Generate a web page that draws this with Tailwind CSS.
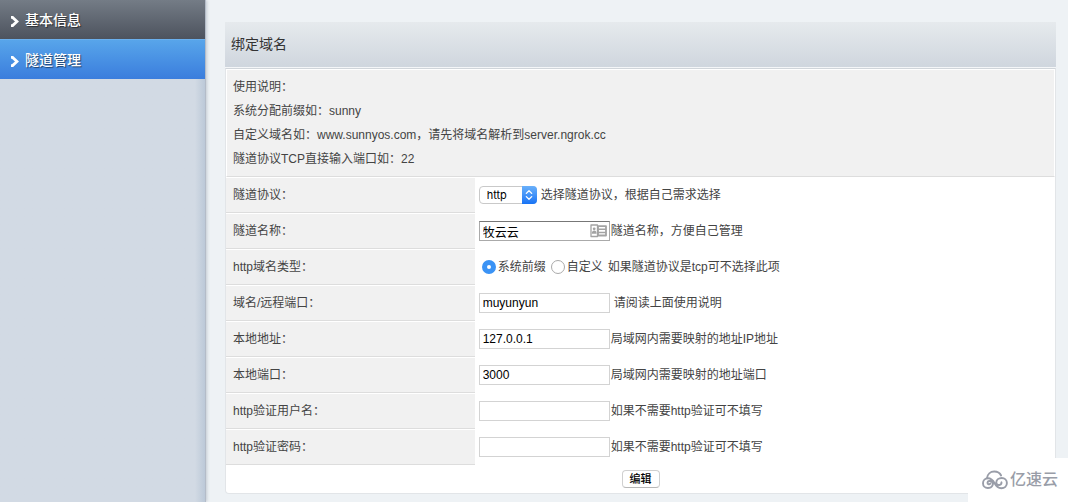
<!DOCTYPE html>
<html lang="zh-CN">
<head>
<meta charset="utf-8">
<meta name="viewport" content="width=device-width, initial-scale=1">
<title>隧道管理</title>
<script src="https://cdn.jsdelivr.net/npm/@tailwindcss/browser@4"></script>
</head>
<body class="relative flex min-h-screen bg-[#eef2f5] font-['Liberation_Sans','Noto_Sans_CJK_SC',sans-serif] text-xs text-[#444]">

<aside class="w-[206px] shrink-0 border-r border-[#b4bcc8] bg-[#d2dae4] bg-linear-to-l from-[#bcc9d8] to-[#d2dae4] to-[10px] shadow-[1px_0_3px_#c3cad3]">
  <nav class="text-sm font-medium text-white [text-shadow:1px_1px_1px_#0008]">
    <a href="#info" class="flex h-[39px] items-center gap-[6px] bg-linear-to-b from-[#747c86] to-[#4d535e] pl-[10px]">
      <svg class="mt-1 h-[11px] w-[9px]" viewBox="0 0 9 11" fill="none" stroke="currentColor" stroke-width="2.8"><path d="M1 1.400h1.600L7 5.500 2.600 9.600H1"/></svg>
      基本信息
    </a>
    <a href="#tunnels" class="flex h-10 items-center gap-[6px] border-t border-[#6bb0ee] bg-linear-to-b from-[#58a5ea] to-[#3b7ddd] pl-[10px]">
      <svg class="mt-1 h-[11px] w-[9px]" viewBox="0 0 9 11" fill="none" stroke="currentColor" stroke-width="2.8"><path d="M1 1.400h1.600L7 5.500 2.600 9.600H1"/></svg>
      隧道管理
    </a>
  </nav>
</aside>

<main class="min-w-0 flex-1 pt-[22px] pr-3 pb-2 pl-[19px]">
  <h1 class="flex h-[46px] items-center border-b border-[#f4f6f8] bg-linear-to-b from-[#e6eaed] to-[#cfd6de] pb-0.5 pl-[6px] text-sm text-[#333]">绑定域名</h1>
  <form class="rounded-b border border-t-[#d0d5da] border-[#e2e5e8] bg-white">
    <table class="w-full table-fixed border-separate border-spacing-0">
      <colgroup><col class="w-[30%]"><col></colgroup>
      <tbody>
        <tr>
          <td colspan="2" class="border border-white border-b-[#ddd] bg-[#f1f1f1] px-[6px] pt-[5px] pb-[5px] leading-6">
            <p>使用说明：</p>
            <p>系统分配前缀如：sunny</p>
            <p>自定义域名如：www.sunnyos.com，请先将域名解析到server.ngrok.cc</p>
            <p>隧道协议TCP直接输入端口如：22</p>
          </td>
        </tr>
        <tr class="h-9">
          <th scope="row" class="border-y border-t-white border-b-[#ddd] bg-[#f1f1f1] pl-[7px] text-left font-normal"><label for="protocol">隧道协议：</label></th>
          <td class="pl-1">
            <div class="flex items-center gap-1">
              <div class="relative flex">
                <select id="protocol" class="h-[18px] w-[58px] appearance-none rounded border border-[#c9c9c9] bg-white pl-[7px] font-['Inter',sans-serif] text-[11px] leading-4 text-black"><option>http</option><option>https</option><option>tcp</option></select>
                <span class="pointer-events-none absolute inset-y-0 right-0 flex w-[15px] items-center justify-center rounded-r bg-linear-to-b from-[#69b0fa] to-[#1673f5]">
                  <svg class="h-3 w-2" viewBox="0 0 8 12" fill="none" stroke="white" stroke-width="1.3" stroke-linecap="round" stroke-linejoin="round"><path d="M1.300 4.400 4 1.700l2.700 2.700M1.300 7.600 4 10.300l2.700-2.700"/></svg>
                </span>
              </div>
              <span>选择隧道协议，根据自己需求选择</span>
            </div>
          </td>
        </tr>
        <tr class="h-9">
          <th scope="row" class="border-y border-t-white border-b-[#ddd] bg-[#f1f1f1] pl-[7px] text-left font-normal"><label for="name">隧道名称：</label></th>
          <td class="pl-1">
            <div class="flex items-center gap-px">
              <div class="relative flex">
                <input id="name" type="text" value="牧云云" class="h-5 w-[131px] border border-[#aaa] border-t-[#777] bg-white pr-6 pl-[3px] text-black">
                <svg class="pointer-events-none absolute top-[3px] right-[3px] h-[14px] w-[17px]" viewBox="0 0 17 14" fill="none" stroke="#a3a3a3" stroke-linejoin="round"><path d="M1 1h6.500v11.500H1z" stroke-width="1.300"/><path d="M8 2.200h8v9.300H8z" stroke-width="1.800"/><path d="M8 5.300h8M8 8.400h8" stroke-width="1.500"/><circle cx="4.200" cy="4.800" r="1.400" fill="#a3a3a3" stroke="none"/><path d="M1.800 9.800c0-2.200 1-3.200 2.400-3.200s2.400 1 2.400 3.200z" fill="#a3a3a3" stroke="none"/></svg>
              </div>
              <span>隧道名称，方便自己管理</span>
            </div>
          </td>
        </tr>
        <tr class="h-9">
          <th scope="row" class="border-y border-t-white border-b-[#ddd] bg-[#f1f1f1] pl-[7px] text-left font-normal">http域名类型：</th>
          <td class="pl-[7px]">
            <div class="flex items-center gap-[5px]">
              <label class="flex items-center gap-0.5"><input type="radio" name="kind" checked class="size-[14px] appearance-none rounded-full border border-[#aaa] bg-white checked:border-5 checked:border-[#3b93f5]">系统前缀</label>
              <label class="flex items-center gap-0.5"><input type="radio" name="kind" class="size-[14px] appearance-none rounded-full border border-[#aaa] bg-white checked:border-5 checked:border-[#3b93f5]">自定义</label>
              <span>如果隧道协议是tcp可不选择此项</span>
            </div>
          </td>
        </tr>
        <tr class="h-9">
          <th scope="row" class="border-y border-t-white border-b-[#ddd] bg-[#f1f1f1] pl-[7px] text-left font-normal"><label for="domain">域名/远程端口：</label></th>
          <td class="pl-1"><div class="flex items-center gap-1"><input id="domain" type="text" value="muyunyun" class="h-5 w-[131px] border border-[#d3d3d3] bg-white px-[3px] text-black"><span>请阅读上面使用说明</span></div></td>
        </tr>
        <tr class="h-9">
          <th scope="row" class="border-y border-t-white border-b-[#ddd] bg-[#f1f1f1] pl-[7px] text-left font-normal"><label for="host">本地地址：</label></th>
          <td class="pl-1"><div class="flex items-center gap-px"><input id="host" type="text" value="127.0.0.1" class="h-5 w-[131px] border border-[#d3d3d3] bg-white px-[3px] text-black"><span>局域网内需要映射的地址IP地址</span></div></td>
        </tr>
        <tr class="h-9">
          <th scope="row" class="border-y border-t-white border-b-[#ddd] bg-[#f1f1f1] pl-[7px] text-left font-normal"><label for="port">本地端口：</label></th>
          <td class="pl-1"><div class="flex items-center gap-px"><input id="port" type="text" value="3000" class="h-5 w-[131px] border border-[#d3d3d3] bg-white px-[3px] text-black"><span>局域网内需要映射的地址端口</span></div></td>
        </tr>
        <tr class="h-9">
          <th scope="row" class="border-y border-t-white border-b-[#ddd] bg-[#f1f1f1] pl-[7px] text-left font-normal"><label for="user">http验证用户名：</label></th>
          <td class="pl-1"><div class="flex items-center gap-px"><input id="user" type="text" class="h-5 w-[131px] border border-[#d3d3d3] bg-white px-[3px] text-black"><span>如果不需要http验证可不填写</span></div></td>
        </tr>
        <tr class="h-9">
          <th scope="row" class="border-y border-t-white border-b-[#ddd] bg-[#f1f1f1] pl-[7px] text-left font-normal"><label for="pass">http验证密码：</label></th>
          <td class="pl-1"><div class="flex items-center gap-px"><input id="pass" type="password" class="h-5 w-[131px] border border-[#d3d3d3] bg-white px-[3px] text-black"><span>如果不需要http验证可不填写</span></div></td>
        </tr>
      </tbody>
    </table>
    <div class="flex h-7 items-center justify-center">
      <button type="submit" class="h-[18px] rounded border border-[#d0d0d0] border-b-[#b8b8b8] bg-white px-[7px] text-[11px] leading-4 font-medium text-black">编辑</button>
    </div>
  </form>
</main>

<div class="absolute right-0 bottom-0 flex h-11 w-[100px] items-center gap-0.5 bg-white pl-[14px] text-base font-medium text-[#999da8]">
  <svg class="h-5 w-[26px] shrink-0" viewBox="0 0 26 20" fill="none" stroke="currentColor" stroke-width="1.900" stroke-linecap="round"><path d="M5 8.200C5.400 4.200 8.400 1.500 12.200 1.500c3.300 0 5.800 1.600 6.900 4"/><path d="M8.300 13.600c-.8 1.300-3 .7-2.800-1 .2-1.600 2.600-2.300 4.300-.9 2.300 2.100.7 6.300-4 6.300C3 18 1 16 1 13.200 1 10.300 3.200 8.300 6 8.300c3.500 0 5.200 2.400 6.600 5 1.500 2.900 3.400 4.900 6.700 4.900 3.300 0 5.600-2.200 5.600-5.200s-2.300-5-5.100-5c-3.100 0-5.500 2-5.500 4.400 0 2 1.800 2.900 3.500 2.400 1.500-.4 1.900-1.600 1.600-2.500"/></svg>
  <span class="whitespace-nowrap">亿速云</span>
</div>
</body>
</html>
